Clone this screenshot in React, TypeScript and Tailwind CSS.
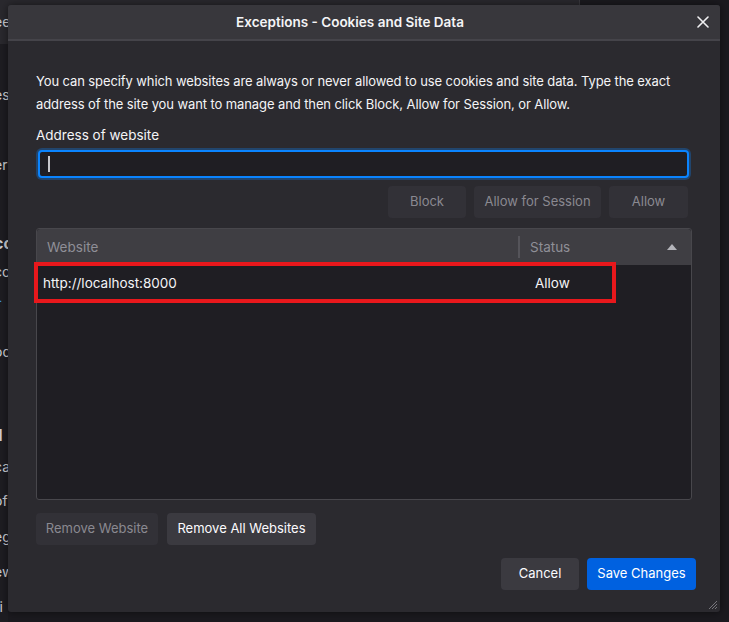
import React from "react";

const font = { fontFamily: "Inter, 'Noto Sans', sans-serif" };

function Btn({ children, disabled, primary, className = "" }: { children: React.ReactNode; disabled?: boolean; primary?: boolean; className?: string }) {
  const base = "h-[32px] rounded-[4px] text-[13px] whitespace-nowrap flex items-center justify-center ";
  const color = primary
    ? "bg-[#0061e0] text-white"
    : disabled
    ? "bg-[#323137] text-[#8a8991]"
    : "bg-[#3b3a40] text-[#fbfbfe]";
  return <div className={base + color + " " + className}>{children}</div>;
}

export default function App() {
  return (
    <div className="relative w-[729px] h-[622px] bg-[#1b1a1f] overflow-hidden" style={font}>
      {/* background page fragments */}
      <div className="absolute left-0 top-0 w-[580px] h-[44px] bg-[#2a292e] border-r border-[#3a393e]"></div>
      <div className="absolute left-0 top-[44px] w-[8px] h-[578px] bg-[#1e1d22]"></div>
      <div className="absolute left-[-6px] top-0 text-[14px] text-[#cfcfd4] leading-none whitespace-nowrap">
        <div className="absolute top-[15px]">ee</div>
        <div className="absolute top-[88px]">es</div>
        <div className="absolute top-[158px]">er</div>
        <div className="absolute top-[235px] font-bold text-[16px]">cc</div>
        <div className="absolute top-[265px]">co</div>
        <div className="absolute top-[290px] text-[#3d8fe0]">L</div>
        <div className="absolute top-[345px]">od</div>
        <div className="absolute top-[427px] font-bold text-[16px]">ll</div>
        <div className="absolute top-[460px]">ca</div>
        <div className="absolute top-[494px]">of</div>
        <div className="absolute top-[530px]">eg</div>
        <div className="absolute top-[565px]">ew</div>
        <div className="absolute top-[600px]">ri</div>
      </div>

      {/* dialog */}
      <div className="absolute left-[8px] top-[5px] w-[712px] h-[607px] bg-[#2b2a2f] rounded-[3px] flex flex-col shadow-[0_0_8px_rgba(0,0,0,0.5)]">
        <div className="relative h-[36px] bg-[#38373c] border-b-[2px] border-[#45444a] rounded-t-[3px] flex items-center justify-center pr-[28px]">
          <span className="text-[13.5px] font-semibold text-[#f4f4f6]">Exceptions - Cookies and Site Data</span>
          <svg className="absolute right-[11px] top-[11px]" width="12" height="12" viewBox="0 0 12 12">
            <path d="M1 1L11 11M11 1L1 11" stroke="#f0f0f2" strokeWidth="1.6" strokeLinecap="round" />
          </svg>
        </div>

        <div className="flex flex-col px-[28px] pt-[29px] flex-1">
          <p className="text-[13px] leading-[23px] text-[#f4f4f6] tracking-[-0.1px] whitespace-nowrap">
            You can specify which websites are always or never allowed to use cookies and site data. Type the exact
            <br />
            address of the site you want to manage and then click Block, Allow for Session, or Allow.
          </p>
          <div className="mt-[9px] text-[13.5px] text-[#f4f4f6] leading-[20px]">Address of website</div>
          <div className="mt-[5px] ml-[2px] mr-[3px] h-[28px] rounded-[4px] border-[2px] border-[#0a84ff] bg-[#1f1e23] shadow-[0_0_0_2px_rgba(10,132,255,0.3)] flex items-center pl-[8px]">
            <div className="w-[1.5px] h-[16px] bg-[#c8c8cc]"></div>
          </div>
          <div className="mt-[8px] flex justify-end gap-[8px] pr-[4px]">
            <Btn disabled className="w-[78px]">Block</Btn>
            <Btn disabled className="w-[127px]">Allow for Session</Btn>
            <Btn disabled className="w-[79px]">Allow</Btn>
          </div>

          <div className="mt-[10px] h-[272px] border border-[#48474c] rounded-[3px] bg-[#1f1e23] flex flex-col">
            <div className="h-[36px] bg-[#3f3e43] flex items-center text-[13.5px] text-[#8f8f97] rounded-t-[3px]">
              <div className="w-[483px] pl-[10px] border-r-[2px] border-[#55545a] h-[22px] flex items-center">Website</div>
              <div className="flex-1 pl-[10px] flex items-center justify-between pr-[14px]">
                <span>Status</span>
                <svg width="10" height="6" viewBox="0 0 10 6"><path d="M0 6L5 0L10 6Z" fill="#b4b4ba" /></svg>
              </div>
            </div>
            <div className="relative h-[36px] flex items-center text-[13.5px] text-[#f4f4f6]">
              <div className="absolute left-[-3px] top-[-3px] w-[582px] h-[41px] border-[4px] border-[#e8181c]"></div>
              <div className="w-[498px] pl-[6px]">http://localhost:8000</div>
              <div>Allow</div>
            </div>
          </div>

          <div className="mt-[13px] flex gap-[9px]">
            <Btn disabled className="w-[122px]">Remove Website</Btn>
            <Btn className="w-[149px]">Remove All Websites</Btn>
          </div>

          <div className="mt-[13px] flex justify-end gap-[8px] mr-[-4px]">
            <Btn className="w-[78px]">Cancel</Btn>
            <Btn primary className="w-[109px]">Save Changes</Btn>
          </div>
        </div>

        <svg className="absolute right-[2px] bottom-[2px]" width="12" height="12" viewBox="0 0 12 12">
          <path d="M11 3L3 11M11 6L6 11M11 9L9 11" stroke="#77767c" strokeWidth="1" />
        </svg>
      </div>
    </div>
  );
}
